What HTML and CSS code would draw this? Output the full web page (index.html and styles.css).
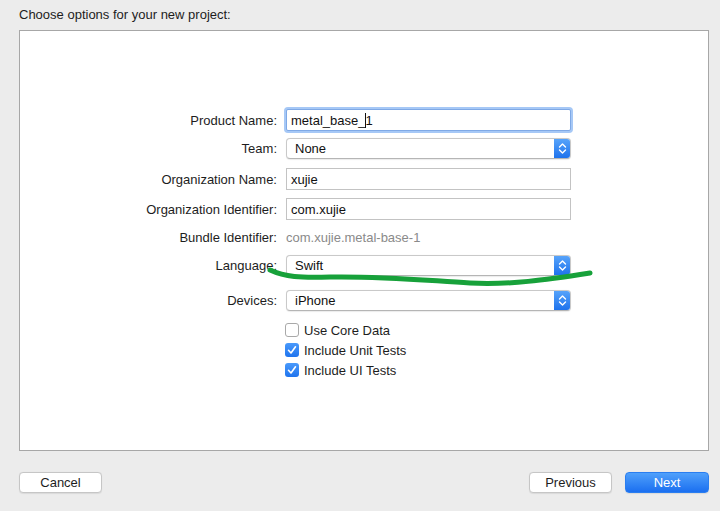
FILE: index.html
```html
<!DOCTYPE html>
<html>
<head>
<meta charset="utf-8">
<link rel="stylesheet" href="styles.css">
</head>
<body>
<div class="window">
  <div class="title">Choose options for your new project:</div>
  <div class="panel">
    <div class="form">
      <div class="row r-product">
        <div class="label">Product Name:</div>
        <div class="field focus"><span>metal_base_</span><span class="caret"></span><span>1</span></div>
      </div>
      <div class="row r-team">
        <div class="label">Team:</div>
        <div class="popup"><span class="ptext">None</span><span class="arrows"><svg width="9" height="13" viewBox="0 0 9 13"><path d="M1.5 5 L4.5 2 L7.5 5 M1.5 8 L4.5 11 L7.5 8" fill="none" stroke="#fff" stroke-width="1.4" stroke-linecap="round" stroke-linejoin="round"/></svg></span></div>
      </div>
      <div class="row r-orgname">
        <div class="label">Organization Name:</div>
        <div class="field"><span>xujie</span></div>
      </div>
      <div class="row r-orgid">
        <div class="label">Organization Identifier:</div>
        <div class="field"><span>com.xujie</span></div>
      </div>
      <div class="row r-bundle">
        <div class="label">Bundle Identifier:</div>
        <div class="static">com.xujie.metal-base-1</div>
      </div>
      <div class="row r-lang">
        <div class="label">Language:</div>
        <div class="popup"><span class="ptext">Swift</span><span class="arrows"><svg width="9" height="13" viewBox="0 0 9 13"><path d="M1.5 5 L4.5 2 L7.5 5 M1.5 8 L4.5 11 L7.5 8" fill="none" stroke="#fff" stroke-width="1.4" stroke-linecap="round" stroke-linejoin="round"/></svg></span></div>
      </div>
      <div class="row r-dev">
        <div class="label">Devices:</div>
        <div class="popup"><span class="ptext">iPhone</span><span class="arrows"><svg width="9" height="13" viewBox="0 0 9 13"><path d="M1.5 5 L4.5 2 L7.5 5 M1.5 8 L4.5 11 L7.5 8" fill="none" stroke="#fff" stroke-width="1.4" stroke-linecap="round" stroke-linejoin="round"/></svg></span></div>
      </div>
      <div class="row r-cb1">
        <div class="label"></div>
        <div class="check"><span class="box"></span><span>Use Core Data</span></div>
      </div>
      <div class="row r-cb2">
        <div class="label"></div>
        <div class="check"><span class="box on"><svg width="14" height="14" viewBox="0 0 14 14"><path d="M3.5 7.3 L6 10 L10.5 3.8" fill="none" stroke="#fff" stroke-width="1.6" stroke-linecap="round" stroke-linejoin="round"/></svg></span><span>Include Unit Tests</span></div>
      </div>
      <div class="row r-cb3">
        <div class="label"></div>
        <div class="check"><span class="box on"><svg width="14" height="14" viewBox="0 0 14 14"><path d="M3.5 7.3 L6 10 L10.5 3.8" fill="none" stroke="#fff" stroke-width="1.6" stroke-linecap="round" stroke-linejoin="round"/></svg></span><span>Include UI Tests</span></div>
      </div>
    </div>
  </div>
  <div class="buttons">
    <div class="btn">Cancel</div>
    <div class="spacer"></div>
    <div class="btn">Previous</div>
    <div class="btn primary">Next</div>
  </div>
  <svg class="scribble" width="720" height="511" viewBox="0 0 720 511">
    <path d="M270 270 C 285 277, 300 278, 330 277 C 380 276, 420 280, 470 283 C 510 285, 545 280, 590 273" fill="none" stroke="#17a13a" stroke-width="5" stroke-linecap="round"/>
  </svg>
</div>
</body>
</html>
```

FILE: styles.css
```css
html, body {
  margin: 0;
  padding: 0;
  background: #ececec;
}
body {
  width: 720px;
  height: 511px;
  overflow: hidden;
  font-family: "Liberation Sans", Arial, sans-serif;
  font-size: 13px;
  color: #1d1d1d;
}
.window {
  position: relative;
  width: 720px;
  height: 511px;
  padding: 0 11px 0 19px;
  box-sizing: border-box;
  display: flex;
  flex-direction: column;
}
.title {
  height: 29px;
  line-height: 30px;
  box-sizing: border-box;
}
.panel {
  height: 421px;
  box-sizing: border-box;
  background: #fff;
  border: 1px solid #a7a7a7;
  margin-top: 1px;
  padding-top: 78px;
}
.form {
  display: flex;
  flex-direction: column;
}
.row {
  display: flex;
  align-items: center;
  column-gap: 9px;
}
.label {
  width: 257px;
  text-align: right;
  flex: none;
  color: #1d1d1d;
}
.r-product { height: 22px; }
.r-team { height: 21px; margin-top: 7px; }
.r-orgname { height: 22px; margin-top: 9px; }
.r-orgid { height: 22px; margin-top: 8px; }
.r-bundle { height: 18px; margin-top: 8px; }
.r-lang { height: 21px; margin-top: 9px; }
.r-dev { height: 21px; margin-top: 14px; }
.r-cb1 { height: 14px; margin-top: 12px; }
.r-cb2 { height: 14px; margin-top: 6px; }
.r-cb3 { height: 14px; margin-top: 6px; }

.field {
  width: 285px;
  height: 22px;
  box-sizing: border-box;
  border: 1px solid #c3c3c3;
  background: #fff;
  display: flex;
  align-items: center;
  padding-left: 4px;
  color: #111;
}
.field.focus {
  border: 1px solid #7fa9e6;
  box-shadow: 0 0 0 2px #a6c8f6;
  border-radius: 2px;
}
.caret {
  display: inline-block;
  width: 1px;
  height: 15px;
  background: #111;
  margin: 0 -1px 0 0;
}
.static {
  color: #8a8a8a;
}
.popup {
  width: 285px;
  height: 21px;
  box-sizing: border-box;
  border: 1px solid #c9c9c9;
  border-bottom-color: #b5b5b5;
  border-radius: 4px;
  background: #fff;
  display: flex;
  align-items: center;
  overflow: hidden;
  box-shadow: 0 0.5px 1px rgba(0,0,0,0.08);
}
.ptext {
  flex: 1;
  padding-left: 8px;
  color: #111;
}
.arrows {
  width: 17px;
  height: 21px;
  margin-right: -1px;
  background: linear-gradient(#5aa6fb, #1b70ec);
  display: flex;
  align-items: center;
  justify-content: center;
  border-radius: 0 4px 4px 0;
}
.check {
  display: flex;
  align-items: center;
  column-gap: 5px;
  margin-left: -1px;
}
.box {
  width: 14px;
  height: 14px;
  box-sizing: border-box;
  border: 1px solid #a9a9a9;
  border-radius: 3px;
  background: #fff;
  display: flex;
  align-items: center;
  justify-content: center;
}
.box.on {
  border: none;
  background: linear-gradient(#4a9afb, #1f74ee);
}
.buttons {
  display: flex;
  align-items: center;
  margin-top: 21px;
  column-gap: 13px;
}
.spacer { flex: 1; }
.btn {
  width: 83px;
  height: 21px;
  box-sizing: border-box;
  border: 1px solid #c6c6c6;
  border-radius: 4px;
  background: #fff;
  display: flex;
  align-items: center;
  justify-content: center;
  color: #1d1d1d;
  box-shadow: 0 0.5px 1px rgba(0,0,0,0.08);
}
.btn.primary {
  width: 84px;
  border: 1px solid #2a7ef0;
  background: linear-gradient(#4fa0fb, #1b6ff0);
  color: #fff;
}
.scribble {
  position: absolute;
  left: 0;
  top: 0;
  pointer-events: none;
}
```
